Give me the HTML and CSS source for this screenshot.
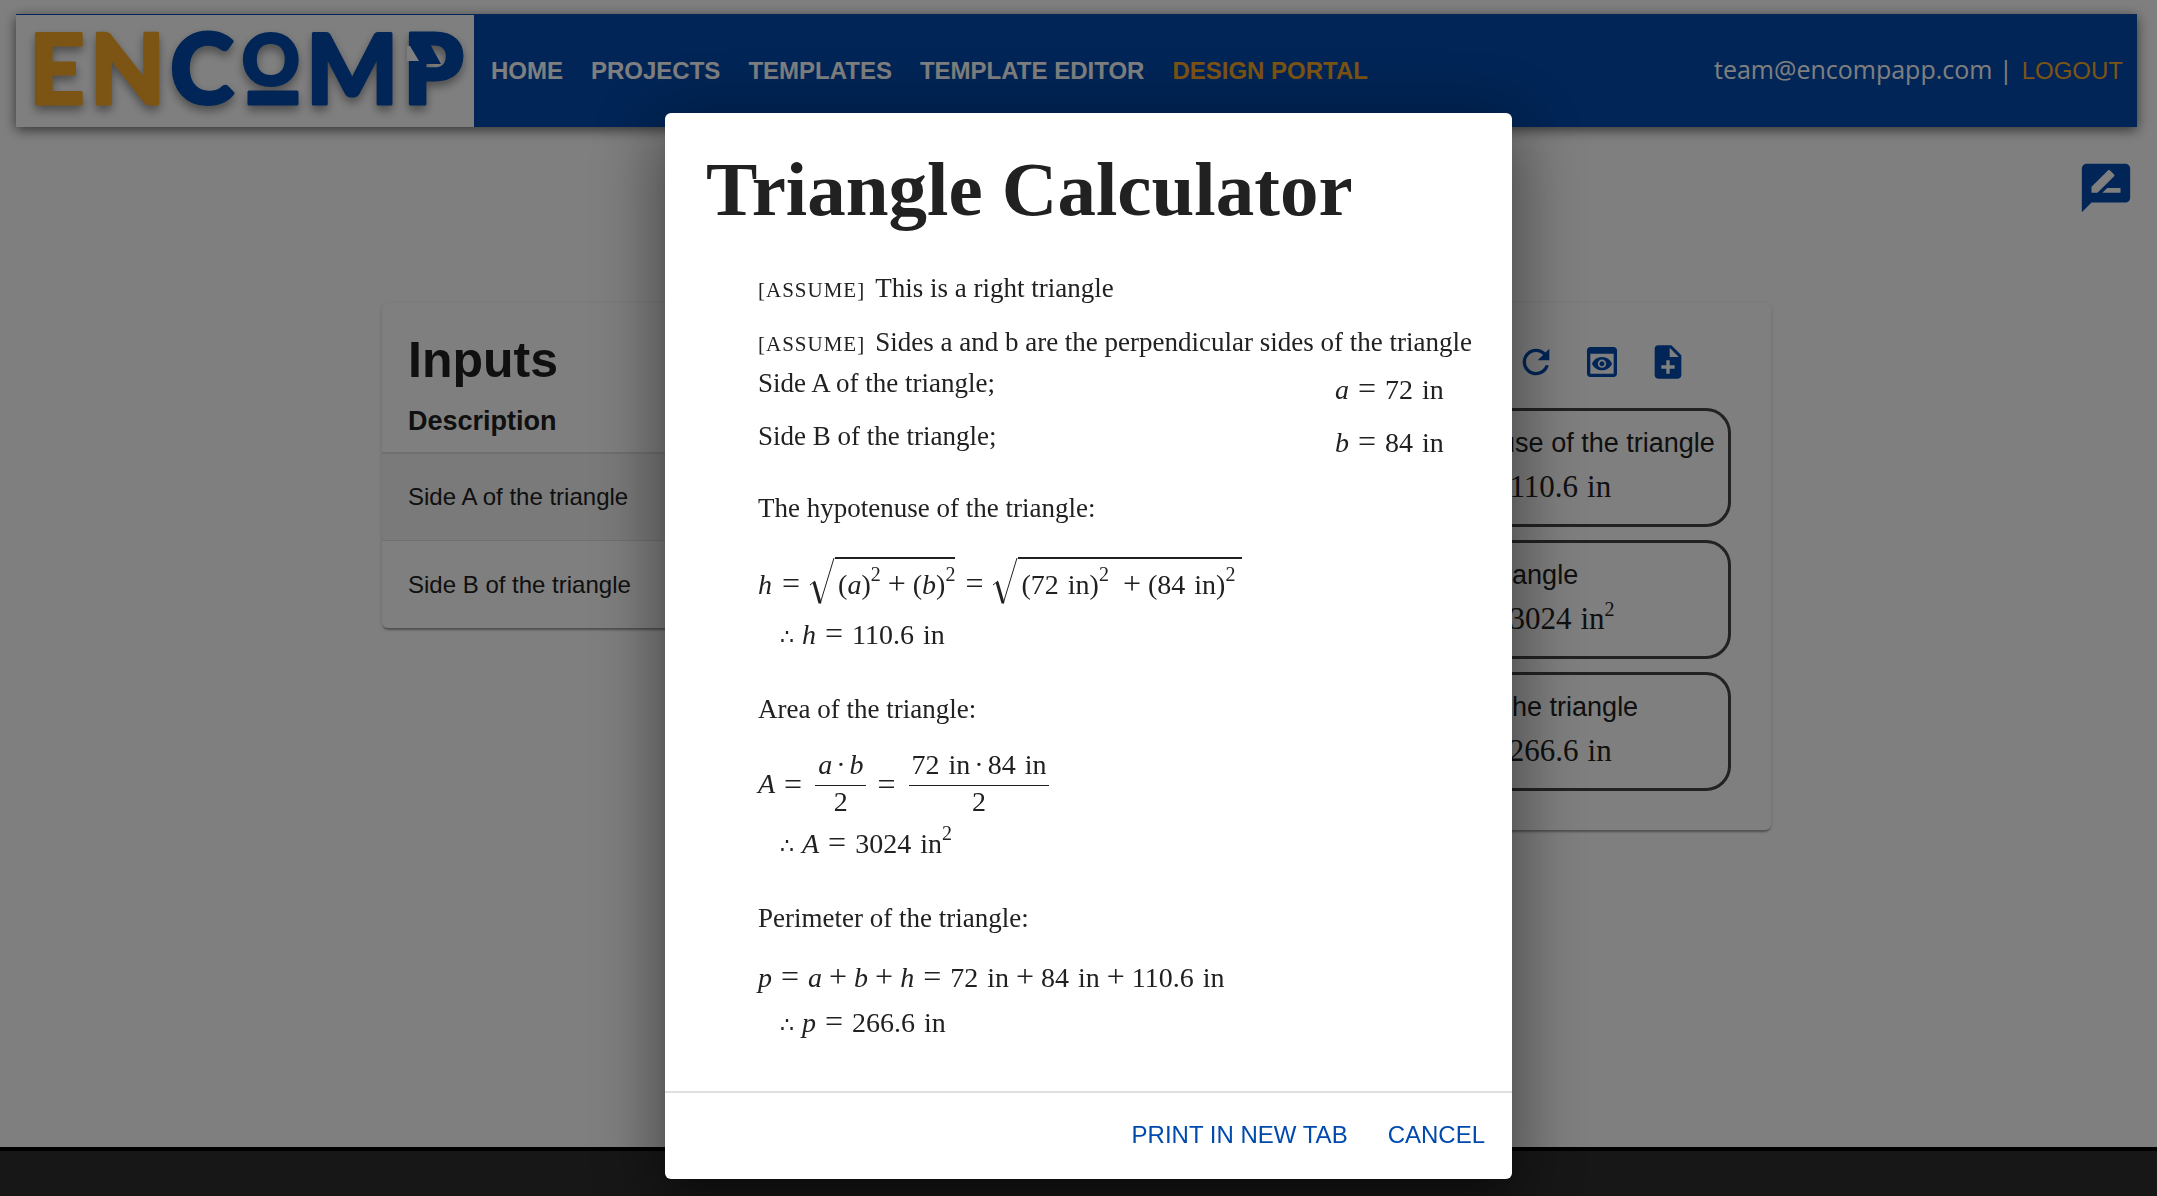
FILE: index.html
```html
<!DOCTYPE html>
<html lang="en">
<head>
<meta charset="utf-8">
<title>Encomp - Triangle Calculator</title>
<link rel="stylesheet" href="styles.css">
</head>
<body>
<header class="banner">
  <a class="logo" href="#" aria-label="Encomp">
    <svg class="logo-mark" viewBox="0 0 458 112">
      <g class="logo-letters">
        <text class="logo-gold" x="13 74" y="89">EN</text>
        <text class="logo-blue" x="154" y="89">C</text>
        <text class="logo-blue logo-small" x="226" y="70">O</text>
        <rect class="logo-blue" x="233" y="77" width="48" height="12"/>
        <text class="logo-blue" x="290 387" y="89">MP</text>
      </g>
      <path class="logo-fold" d="M406 29h8l11 20h-19z"/>
      <path class="logo-notch" d="M391 31h3l9 15h-12z"/>
    </svg>
  </a>
  <nav class="nav">
    <a class="nav-link" href="#">HOME</a>
    <a class="nav-link" href="#">PROJECTS</a>
    <a class="nav-link" href="#">TEMPLATES</a>
    <a class="nav-link" href="#">TEMPLATE EDITOR</a>
    <a class="nav-link nav-link-active" href="#">DESIGN PORTAL</a>
  </nav>
  <div class="account"><span class="account-mail">team@encompapp.com |</span><a class="logout" href="#">LOGOUT</a></div>
</header>

<div class="feedback">
  <button class="icon-button" type="button" aria-label="Feedback">
    <svg class="icon-large" viewBox="0 0 24 24"><path d="M20 2H4c-1.1 0-1.99.9-1.99 2L2 22l4-4h14c1.1 0 2-.9 2-2V4c0-1.1-.9-2-2-2zM6 14v-2.47l6.88-6.88c.2-.2.51-.2.71 0l1.77 1.77c.2.2.2.51 0 .71L8.47 14H6zm12 0h-7.5l2-2H18v2z"/></svg>
  </button>
</div>

<main class="workspace">
  <section class="card inputs">
    <h2 class="card-title">Inputs</h2>
    <table class="input-table">
      <thead><tr><th>Description</th></tr></thead>
      <tbody>
        <tr><td>Side A of the triangle</td></tr>
        <tr><td>Side B of the triangle</td></tr>
      </tbody>
    </table>
  </section>
  <section class="card outputs">
    <div class="toolbar">
      <button class="icon-button" type="button" aria-label="Refresh"><svg class="icon" viewBox="0 0 24 24"><path d="M17.65 6.35C16.2 4.9 14.21 4 12 4c-4.42 0-7.99 3.58-7.99 8s3.57 8 7.99 8c3.73 0 6.84-2.55 7.73-6h-2.08c-.82 2.33-3.04 4-5.65 4-3.31 0-6-2.69-6-6s2.69-6 6-6c1.66 0 3.14.69 4.22 1.78L13 11h7V4l-2.35 2.35z"/></svg></button>
      <button class="icon-button" type="button" aria-label="Preview"><svg class="icon" viewBox="0 0 24 24"><path d="M19 3H5c-1.11 0-2 .9-2 2v14c0 1.1.89 2 2 2h14c1.11 0 2-.9 2-2V5c0-1.1-.89-2-2-2zm0 16H5V7h14v12zm-5.5-6c0 .83-.67 1.5-1.5 1.5s-1.5-.67-1.5-1.5.67-1.5 1.5-1.5 1.5.67 1.5 1.5zM12 9c-2.73 0-5.06 1.66-6 4 .94 2.34 3.27 4 6 4s5.06-1.66 6-4c-.94-2.34-3.27-4-6-4zm0 6.5c-1.38 0-2.5-1.12-2.5-2.5s1.12-2.5 2.5-2.5 2.5 1.12 2.5 2.5-1.12 2.5-2.5 2.5z"/></svg></button>
      <button class="icon-button" type="button" aria-label="Add to document"><svg class="icon" viewBox="0 0 24 24"><path d="M14 2H6c-1.1 0-1.99.9-1.99 2L4 20c0 1.1.89 2 1.99 2H18c1.1 0 2-.9 2-2V8l-6-6zm2 14h-3v3h-2v-3H8v-2h3v-3h2v3h3v2zm-3-7V3.5L18.5 9H13z"/></svg></button>
    </div>
    <div class="result-list">
      <div class="result"><div>The hypotenuse of the triangle</div><div class="result-math"><i>h</i><span class="rel">=</span>110.6<span class="unit">in</span></div></div>
      <div class="result"><div>Area of the triangle</div><div class="result-math"><i>A</i><span class="rel">=</span>3024<span class="unit">in<sup>2</sup></span></div></div>
      <div class="result"><div>Perimeter of the triangle</div><div class="result-math"><i>p</i><span class="rel">=</span>266.6<span class="unit">in</span></div></div>
    </div>
  </section>
</main>

<footer class="footer"></footer>

<div class="overlay">
  <div class="modal" role="dialog" aria-modal="true" aria-labelledby="modal-title">
    <div class="modal-body">
      <h1 class="modal-title" id="modal-title">Triangle Calculator</h1>
      <div class="report">
        <p class="assume"><span class="tag">[ASSUME]</span>This is a right triangle</p>
        <p class="assume"><span class="tag">[ASSUME]</span>Sides a and b are the perpendicular sides of the triangle</p>
        <div class="given"><p>Side A of the triangle;</p><div class="given-value"><i>a</i><span class="rel">=</span>72<span class="unit">in</span></div></div>
        <div class="given"><p>Side B of the triangle;</p><div class="given-value"><i>b</i><span class="rel">=</span>84<span class="unit">in</span></div></div>

        <section class="step">
          <p>The hypotenuse of the triangle:</p>
          <div class="eq eq-root">
            <i>h</i><span class="rel">=</span>
            <span class="root"><svg class="root-sign" viewBox="0 0 25 48"><path class="root-hook" d="M0 28l5-4"/><path class="root-stem" d="M4 25l6 21"/><path class="root-rise" d="M10 47L24 1"/></svg><span class="radicand">(<i>a</i>)<sup>2</sup><span class="bin">+</span>(<i>b</i>)<sup>2</sup></span></span>
            <span class="rel">=</span>
            <span class="root"><svg class="root-sign" viewBox="0 0 25 48"><path class="root-hook" d="M0 28l5-4"/><path class="root-stem" d="M4 25l6 21"/><path class="root-rise" d="M10 47L24 1"/></svg><span class="radicand">(72<span class="unit">in</span>)<sup>2</sup>&nbsp;<span class="bin">+</span>(84<span class="unit">in</span>)<sup>2</sup>&nbsp;</span></span>
          </div>
          <div class="eq therefore"><span class="dots">∴</span><i>h</i><span class="rel">=</span>110.6<span class="unit">in</span></div>
        </section>

        <section class="step">
          <p>Area of the triangle:</p>
          <div class="eq eq-frac">
            <i>A</i><span class="rel">=</span>
            <span class="frac"><span class="num"><i>a</i><span class="dot">·</span><i>b</i></span><span>2</span></span>
            <span class="rel">=</span>
            <span class="frac"><span class="num">72<span class="unit">in</span><span class="dot">·</span>84<span class="unit">in</span></span><span>2</span></span>
          </div>
          <div class="eq therefore"><span class="dots">∴</span><i>A</i><span class="rel">=</span>3024<span class="unit">in<sup>2</sup></span></div>
        </section>

        <section class="step">
          <p>Perimeter of the triangle:</p>
          <div class="eq eq-sum"><i>p</i><span class="rel">=</span><i>a</i><span class="bin">+</span><i>b</i><span class="bin">+</span><i>h</i><span class="rel">=</span>72<span class="unit">in</span><span class="bin">+</span>84<span class="unit">in</span><span class="bin">+</span>110.6<span class="unit">in</span></div>
          <div class="eq therefore"><span class="dots">∴</span><i>p</i><span class="rel">=</span>266.6<span class="unit">in</span></div>
        </section>
      </div>
    </div>
    <div class="modal-actions">
      <button class="text-button" type="button">PRINT IN NEW TAB</button>
      <button class="text-button" type="button">CANCEL</button>
    </div>
  </div>
</div>
</body>
</html>
```
FILE: styles.css
```css
:root {
  --blue: #004aad;
  --gold: #f9a826;
  --ink: #212121;
  --sans: "Liberation Sans", Arial, sans-serif;
  --serif: "Liberation Serif", "Times New Roman", serif;
}

* { box-sizing: border-box; }

body {
  margin: 0;
  padding: 14px 20px 0 16px;
  height: 100vh;
  overflow: hidden;
  display: flex;
  flex-direction: column;
  font-family: var(--sans);
  color: var(--ink);
  background: #fff;
}

h1, h2, p { margin: 0; }
button { font: inherit; border: 0; background: none; cursor: pointer; }
a { text-decoration: none; }

/* Banner */
.banner {
  display: flex;
  align-items: center;
  flex: none;
  height: 113px;
  padding-top: 1px;
  background: var(--blue);
  box-shadow: 0 3px 12px rgba(0, 0, 0, .6);
}
.logo { flex: none; width: 458px; height: 112px; background: #fff; }
.logo-mark { display: block; width: 100%; height: 100%; }
.logo-letters {
  font-family: Lato, sans-serif;
  font-weight: 900;
  font-size: 97px;
  stroke-width: 3px;
  stroke-linejoin: round;
  filter: drop-shadow(0 5px 5px rgba(0, 0, 0, .4));
}
.logo-small { font-size: 71px; }
.logo-gold { fill: var(--gold); stroke: var(--gold); }
.logo-blue { fill: var(--blue); stroke: var(--blue); }
.logo-fold { fill: var(--blue); }
.logo-notch { fill: #fff; }
.nav { display: flex; gap: 28px; padding-left: 17px; }
.nav-link { font-size: 24px; font-weight: bold; color: #fff; }
.nav-link-active { color: var(--gold); }
.account { display: flex; align-items: baseline; gap: 9px; margin-left: auto; padding-right: 14px; font-size: 24px; line-height: 28px; }
.account-mail { font-family: "Open Sans", sans-serif; font-size: 25px; line-height: 24px; color: #fff; }
.logout { color: var(--gold); }

/* Feedback */
.feedback { display: flex; justify-content: flex-end; flex: none; height: 176px; padding: 32px 2px 0 0; }
.icon-button { display: block; padding: 0; height: max-content; }
.icon, .icon-large { display: block; fill: var(--blue); }
.icon { width: 40px; height: 40px; }
.icon-large { width: 58px; height: 58px; }

/* Cards */
.workspace {
  display: flex;
  align-items: flex-start;
  justify-content: space-between;
  flex: none;
  width: 100%;
  max-width: 1389px;
  min-height: 844px;
  margin: 0 auto;
}
.card {
  border-radius: 6px;
  background: #fff;
  box-shadow: 0 3px 2px -1px rgba(0, 0, 0, .3), 0 1px 4px rgba(0, 0, 0, .16);
}
.inputs { width: 55%; padding-top: 25px; }
.card-title { padding-left: 26px; font-size: 50px; line-height: 64px; }
.input-table { width: 100%; border-collapse: separate; border-spacing: 0; }
.input-table th {
  padding: 14px 26px 16px;
  font-size: 27px;
  line-height: 30px;
  text-align: left;
  border-bottom: 2px solid #e0e0e0;
}
.input-table td { padding: 0 26px; height: 87px; font-size: 24px; border-bottom: 1px solid #e0e0e0; }
.input-table tr:nth-child(odd) td { background: #f4f4f4; }
.input-table tr:last-child td { border-bottom: 0; background: none; }
.outputs { width: 42%; padding: 39px 40px 39px; }
.toolbar { display: flex; justify-content: flex-end; gap: 26px; padding-right: 43px; }
.result-list { display: flex; flex-direction: column; align-items: flex-end; gap: 13px; padding-top: 26px; }
.result {
  width: 393px;
  height: 119px;
  padding: 14px 9px 0;
  font-size: 27px;
  line-height: 36px;
  white-space: nowrap;
  border: 3px solid #444;
  border-radius: 25px;
}
.result-math { padding-top: 8px; font-family: var(--serif); font-size: 31px; text-align: center; }

/* Footer */
.footer { flex: 1; margin: 0 -20px 0 -16px; border-top: 4px solid #000; background: #2e2e2e; }

/* Modal */
.overlay {
  position: fixed;
  inset: 0;
  display: flex;
  align-items: flex-start;
  justify-content: center;
  padding: 113px 0 0 20px;
  background: rgba(0, 0, 0, .5);
}
.modal {
  width: 847px;
  border-radius: 6px;
  background: #fff;
  box-shadow: 0 16px 22px -10px rgba(0, 0, 0, .2), 0 36px 57px 4px rgba(0, 0, 0, .14), 0 14px 69px 12px rgba(0, 0, 0, .3);
}
.modal-body { padding: 28px 41px 52px; font-family: var(--serif); border-bottom: 2px solid #e0e0e0; }
.modal-title { font-size: 77px; line-height: 96px; }
.report { padding: 35px 0 0 52px; font-size: 27px; line-height: 32px; white-space: nowrap; }
.assume { margin-bottom: 20px; }
.assume:nth-child(2) { margin-bottom: 7px; }
.tag { margin-right: 10px; font-size: 21px; letter-spacing: 1px; }
.given { display: grid; grid-template-columns: 1fr 136px; height: 53px; }
.given-value { padding-top: 7px; font-size: 28px; }
.step { margin-top: 42px; }
.given + .step { margin-top: 19px; }

/* Equations */
i { font-family: var(--serif); }
sup { font-size: 20px; line-height: 0; vertical-align: 13px; }
.unit { margin-left: 9px; }
.rel, .bin { font-size: 32px; line-height: 0; }
.rel { margin: 0 9px; }
.bin { margin: 0 7px; }
.dot { margin: 0 4px; }
.eq { display: flex; align-items: baseline; font-size: 28px; }
.eq-root { margin-top: 33px; }
.eq-root .rel { margin: 0 10px; }
.root { position: relative; padding-left: 25px; }
.root-sign { position: absolute; left: 0; top: 0; width: 25px; height: 48px; fill: none; stroke: var(--ink); }
.root-hook { stroke-width: 1; }
.root-stem { stroke-width: 3; }
.root-rise { stroke-width: 1; }
.radicand { display: block; padding: 10px 0 0 3px; border-top: 2px solid var(--ink); }
.eq-frac { align-items: center; margin-top: 24px; }
.frac { display: grid; justify-items: center; margin: 0 2px 0 4px; }
.num { padding: 0 3px 4px; border-bottom: 1px solid var(--ink); }
.eq-sum { margin-top: 28px; }
.therefore { padding-left: 22px; }
.eq-root + .therefore { margin-top: 18px; }
.eq-frac + .therefore { margin-top: 10px; }
.eq-sum + .therefore { margin-top: 13px; }
.dots { margin-right: 8px; font-family: "DejaVu Serif", serif; font-size: 22px; line-height: 0; }

.modal-actions { display: flex; justify-content: flex-end; gap: 16px; padding: 20px 15px 23px; }
.text-button { padding: 6px 12px; font-size: 24px; line-height: 31px; color: var(--blue); }
```
